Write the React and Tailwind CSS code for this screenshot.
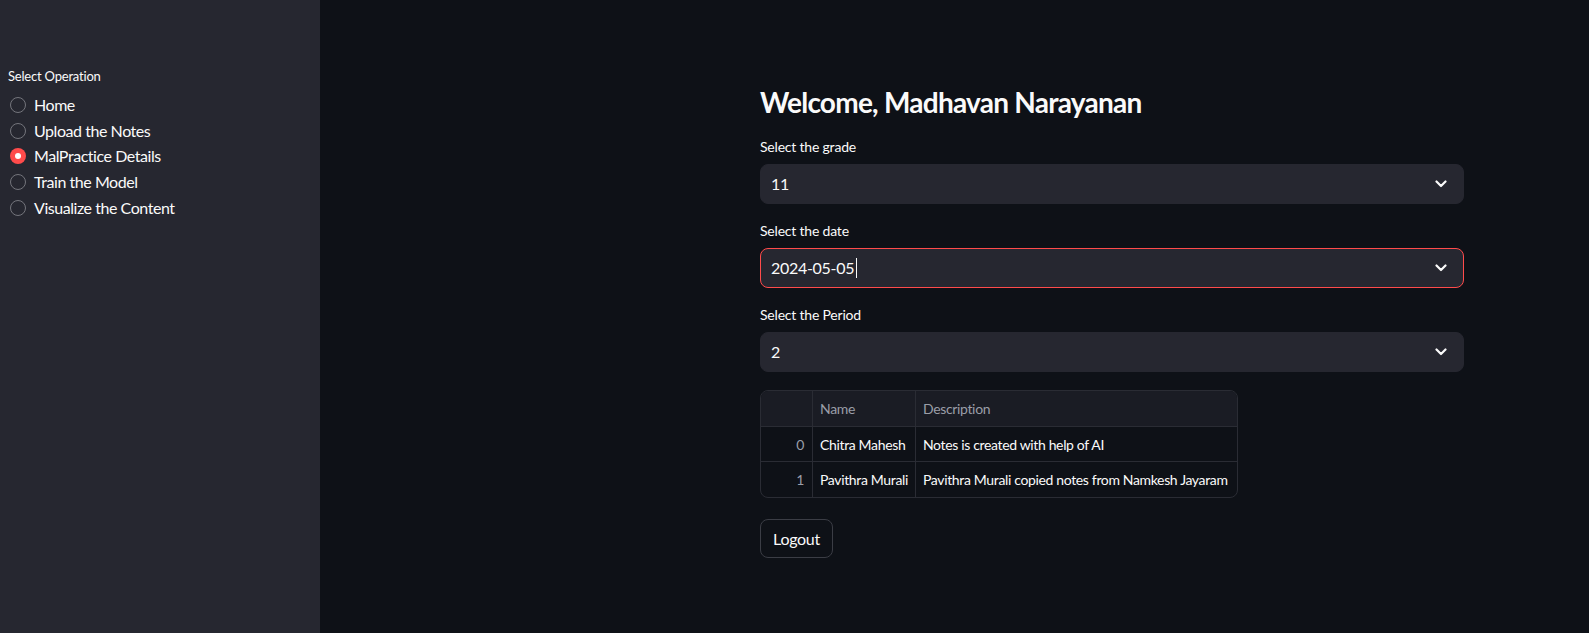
const options = ['Home', 'Upload the Notes', 'MalPractice Details', 'Train the Model', 'Visualize the Content'];

const rows = [
  { idx: 0, name: 'Chitra Mahesh', desc: 'Notes is created with help of AI' },
  { idx: 1, name: 'Pavithra Murali', desc: 'Pavithra Murali copied notes from Namkesh Jayaram' },
];

function Chevron() {
  return (
    <svg width="12" height="8" viewBox="0 0 12 8" fill="none">
      <path d="M1.5 1.5 L6 6 L10.5 1.5" stroke="#fafafa" strokeWidth="2.2" strokeLinecap="round" strokeLinejoin="round" />
    </svg>
  );
}

function SelectBox({ label, value, active }) {
  return (
    <div>
      <div className="h-[20px] text-[14px] leading-[20px] tracking-[-0.2px] text-[#fafafa] mb-[7px]">{label}</div>
      <div
        className={`h-[40px] rounded-[8px] bg-[#262730] flex items-center justify-between pl-[10px] pr-[16px] border ${
          active ? 'border-[#ff4b4b]' : 'border-[#262730]'
        }`}
      >
        <div className="flex items-center text-[16px] tracking-[-0.3px] text-[#fafafa]">
          {value}
          {active && <span className="ml-[2px] inline-block w-px h-[20px] bg-[#fafafa]" />}
        </div>
        <Chevron />
      </div>
    </div>
  );
}

export default function App() {
  return (
    <div className="h-[633px] w-full flex bg-[#0e1117] font-['Lato',sans-serif] text-[#fafafa] overflow-hidden">
      <aside className="w-[320px] shrink-0 bg-[#262730] pt-[66px] pl-[8px]">
        <div className="h-[20px] text-[13px] leading-[20px] tracking-[-0.2px] mb-[6px]">Select Operation</div>
        {options.map((o, i) => (
          <div key={o} className="h-[25.7px] flex items-center">
            {i === 2 ? (
              <span className="ml-[2px] w-[16px] h-[16px] rounded-full bg-[#ff4b4b] flex items-center justify-center">
                <span className="w-[6px] h-[6px] rounded-full bg-white" />
              </span>
            ) : (
              <span className="ml-[2px] w-[16px] h-[16px] rounded-full border border-[#74757c]" />
            )}
            <span className="ml-[8px] text-[16px] tracking-[-0.45px]">{o}</span>
          </div>
        ))}
      </aside>

      <main className="flex-1 pl-[440px] pt-[85px]">
        <div className="w-[704px]">
          <h1 className="h-[34px] text-[28px] leading-[34px] font-bold tracking-[-0.75px]">Welcome, Madhavan Narayanan</h1>
          <div className="mt-[18px] flex flex-col gap-[17px]">
            <SelectBox label="Select the grade" value="11" />
            <SelectBox label="Select the date" value="2024-05-05" active />
            <SelectBox label="Select the Period" value="2" />
          </div>

          <div className="mt-[18px] w-[478px] rounded-[8px] border border-[#2a2c34] overflow-hidden text-[14px] tracking-[-0.35px]">
            <div className="grid grid-cols-[52px_103px_1fr] h-[36px] bg-[#1a1c24] border-b border-[#2a2c34] text-[#9a9ea8]">
              <div className="border-r border-[#2a2c34]" />
              <div className="border-r border-[#2a2c34] flex items-center pl-[7px]">Name</div>
              <div className="flex items-center pl-[7px]">Description</div>
            </div>
            {rows.map((r, i) => (
              <div
                key={r.idx}
                className={`grid grid-cols-[52px_103px_1fr] h-[35px] ${i === 0 ? 'border-b border-[#2a2c34]' : ''}`}
              >
                <div className="border-r border-[#2a2c34] flex items-center justify-end pr-[8px] text-[#9a9ea8]">{r.idx}</div>
                <div className="border-r border-[#2a2c34] flex items-center pl-[7px] whitespace-nowrap">{r.name}</div>
                <div className="flex items-center pl-[7px] whitespace-nowrap">{r.desc}</div>
              </div>
            ))}
          </div>

          <button className="mt-[21px] h-[39px] w-[73px] rounded-[8px] border border-[#3b3d45] bg-[#0e1117] text-[16px] tracking-[-0.3px] text-[#fafafa]">
            Logout
          </button>
        </div>
      </main>
    </div>
  );
}
